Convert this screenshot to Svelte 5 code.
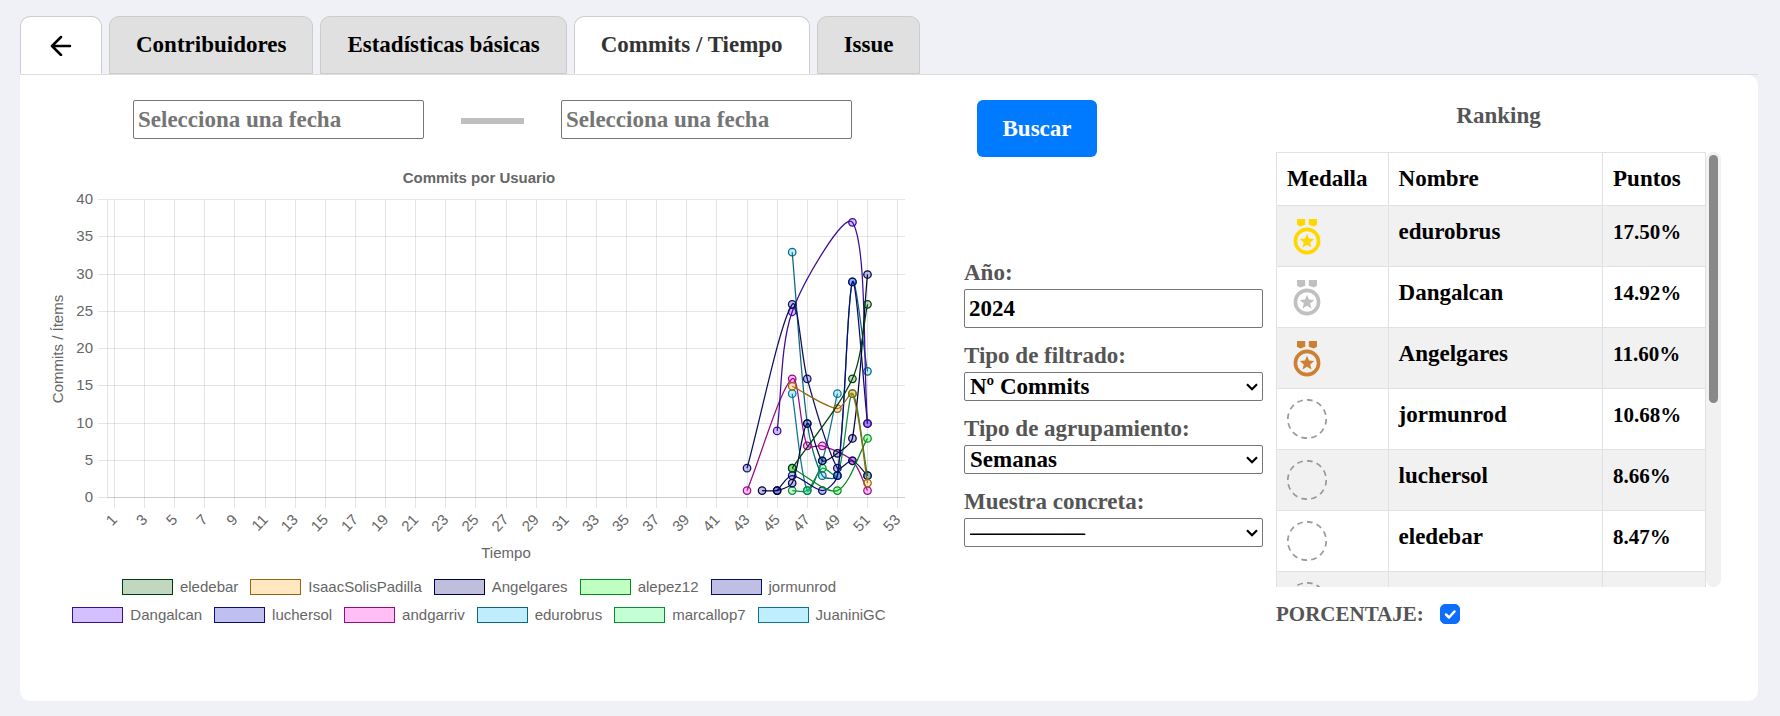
<script>
  const tabs = ['Contribuidores', 'Estadísticas básicas', 'Commits / Tiempo', 'Issue'];
  let active = $state('Commits / Tiempo');
  let from = $state('');
  let to = $state('');
  let year = $state('2024');
  let percent = $state(true);

  const series = [
    { name: 'eledebar', fill: '0,99,0', stroke: '#003c0c', data: [[46, 4], [50, 16], [51, 26]] },
    { name: 'IsaacSolisPadilla', fill: '255,163,3', stroke: '#96660c', data: [[46, 15], [49, 12], [50, 14], [51, 2]] },
    { name: 'Angelgares', fill: '0,0,115', stroke: '#000048', data: [[44, 1], [45, 1], [46, 2], [47, 10], [48, 5], [49, 6], [50, 8], [51, 30]] },
    { name: 'alepez12', fill: '0,255,10', stroke: '#008c1c', data: [[46, 4], [49, 1], [51, 8]] },
    { name: 'jormunrod', fill: '0,0,150', stroke: '#0c0c60', data: [[43, 4], [46, 26], [47, 16], [49, 4], [50, 5], [51, 3]] },
    { name: 'Dangalcan', fill: '85,0,255', stroke: '#3c0c96', data: [[45, 9], [46, 25], [50, 37], [51, 10]] },
    { name: 'luchersol', fill: '0,0,195', stroke: '#0c0c70', data: [[45, 1], [46, 3], [48, 1], [49, 3], [50, 29], [51, 10]] },
    { name: 'andgarriv', fill: '255,0,215', stroke: '#960c84', data: [[43, 1], [46, 16], [47, 7], [48, 7], [50, 5], [51, 1]] },
    { name: 'edurobrus', fill: '0,185,240', stroke: '#0c667c', data: [[46, 33], [47, 10], [48, 3], [49, 3], [50, 29], [51, 17]] },
    { name: 'marcallop7', fill: '15,255,75', stroke: '#0c8c38', data: [[46, 1], [47, 1], [48, 4], [49, 3], [50, 14], [51, 3]] },
    { name: 'JuaniniGC', fill: '0,190,255', stroke: '#0c7494', data: [[46, 14], [47, 1], [48, 5], [49, 14]] }
  ];

  const ranking = [
    { name: 'edurobrus', points: '17.50%', medal: '#ffd700' },
    { name: 'Dangalcan', points: '14.92%', medal: '#c0c0c0' },
    { name: 'Angelgares', points: '11.60%', medal: '#cd7f32' },
    { name: 'jormunrod', points: '10.68%' },
    { name: 'luchersol', points: '8.66%' },
    { name: 'eledebar', points: '8.47%' },
    {}, {}, {}, {}, {}
  ];

  // Scroll position of the ranking, as a share of its content height
  let scrolled = $state(0);
  const onscroll = (e) => (scrolled = e.currentTarget.scrollTop / e.currentTarget.scrollHeight);

  // Plot geometry
  const left = 80, right = 877, top = 35, bottom = 333;
  const px = (week) => 86.5 + (week - 1) * 15.06;
  const py = (value) => bottom - (value * (bottom - top)) / 40;
  const crisp = (v) => Math.floor(v) + 0.5;
  const weeks = Array.from({ length: 27 }, (_, i) => i * 2 + 1);
  const values = [0, 5, 10, 15, 20, 25, 30, 35, 40];

  // Smooth line: control points follow the neighbours, weighted by distance
  function curve(data) {
    const tension = 0.3;
    const p = data.map(([w, v]) => [px(w), py(v)]);
    const clamp = (y) => Math.max(top, Math.min(bottom, y));
    const ctrl = p.map((c, i) => {
      const a = p[i - 1] ?? c;
      const b = p[i + 1] ?? c;
      const d1 = Math.hypot(c[0] - a[0], c[1] - a[1]);
      const d2 = Math.hypot(b[0] - c[0], b[1] - c[1]);
      const f1 = (tension * d1) / (d1 + d2);
      const f2 = (tension * d2) / (d1 + d2);
      return [
        [c[0] - f1 * (b[0] - a[0]), clamp(c[1] - f1 * (b[1] - a[1]))],
        [c[0] + f2 * (b[0] - a[0]), clamp(c[1] + f2 * (b[1] - a[1]))]
      ];
    });
    return p
      .map((c, i) => (i === 0 ? `M${c}` : `C${ctrl[i - 1][1]} ${ctrl[i][0]} ${c}`))
      .join(' ');
  }
  const layers = [...series].reverse();
</script>

{#snippet chevron()}
  <svg class="chevron" viewBox="0 0 12 8" aria-hidden="true"><path d="M1 1.2 6 6.200l5-5" fill="none" stroke="#000" stroke-width="2.200" /></svg>
{/snippet}

<div class="page">
  <nav class="tabs">
    <button class="tab back" aria-label="Volver">
      <svg width="22" height="22" viewBox="0 0 22 22" aria-hidden="true">
        <path d="M20 12H2.500M11 3 2 12l9 9" fill="none" stroke="#000" stroke-width="2.500" stroke-linejoin="round" stroke-linecap="round" />
      </svg>
    </button>
    {#each tabs as tab}
      <button class="tab" class:active={tab === active} onclick={() => (active = tab)}>{tab}</button>
    {/each}
  </nav>

  <main class="panel">
    <section class="chart-column">
      <div class="dates">
        <input type="text" placeholder="Selecciona una fecha" aria-label="Fecha inicial" bind:value={from} />
        <span class="dash"></span>
        <input type="text" placeholder="Selecciona una fecha" aria-label="Fecha final" bind:value={to} />
      </div>

      <svg class="chart" viewBox="0 0 923 403" role="img" aria-label="Commits por Usuario">
        <text class="title" x="451" y="18" text-anchor="middle">Commits por Usuario</text>
        <g class="grid">
          {#each weeks as w}
            <path d="M{crisp(px(w))} {top}V{bottom + 10}" />
          {/each}
          {#each values as v}
            <path d="M{left - 10} {crisp(py(v) - 0.5)}H{right}" />
          {/each}
          <path d="M{left - 0.5} {top}V{bottom}" />
          <path d="M{left} {bottom - 0.5}H{right}" />
        </g>
        {#each values as v}
          <text x="65" y={py(v) + 4} text-anchor="end">{v}</text>
        {/each}
        {#each weeks as w}
          <text transform="translate({px(w)} 352) rotate(-46)" y="5" text-anchor="end">{w}</text>
        {/each}
        <text transform="translate(35 184) rotate(-90)" text-anchor="middle">Commits / Ítems</text>
        <text x="478" y="393" text-anchor="middle">Tiempo</text>
        {#each layers as s}
          <path class="line" d={curve(s.data)} stroke={s.stroke} />
          {#each s.data as [w, v]}
            <circle cx={px(w)} cy={py(v)} r="3.750" fill="rgba({s.fill},0.25)" stroke={s.stroke} />
          {/each}
        {/each}
      </svg>

      <ul class="legend">
        {#each series as s}
          <li><span class="swatch" style="background: rgba({s.fill},0.25); border-color: {s.stroke}"></span>{s.name}</li>
        {/each}
      </ul>
    </section>

    <section class="filters">
      <button class="search">Buscar</button>
      <div class="fields">
        <div class="field">
          <label for="year">Año:</label>
          <input id="year" type="text" bind:value={year} />
        </div>
        <div class="field">
          <label for="filter">Tipo de filtrado:</label>
          <div class="select"><select id="filter"><option>Nº Commits</option></select>{@render chevron()}</div>
        </div>
        <div class="field">
          <label for="group">Tipo de agrupamiento:</label>
          <div class="select"><select id="group"><option>Semanas</option></select>{@render chevron()}</div>
        </div>
        <div class="field">
          <label for="sample">Muestra concreta:</label>
          <div class="select"><select id="sample"><option>—————</option></select>{@render chevron()}</div>
        </div>
      </div>
    </section>

    <section class="ranking">
      <h2>Ranking</h2>
      <div class="list">
        <div class="scroll" {onscroll}>
          <table>
            <thead>
              <tr><th class="medal">Medalla</th><th>Nombre</th><th class="points">Puntos</th></tr>
            </thead>
            <tbody>
              {#each ranking as r}
                <tr>
                  <td>
                    <svg class="badge" viewBox="0 0 40 40" aria-hidden="true">
                      {#if r.medal}
                        <g fill={r.medal}>
                          <path d="M10 3h8.200v5.700l-5 1.700-3.200-1.700zM21.800 3h8.200v5.700l-3.200 1.700-5-1.700z" />
                          <circle cx="20" cy="25" r="11.600" fill="none" stroke={r.medal} stroke-width="3.600" />
                          <path d="m20 17.800 2 4.800 5.200.400-4 3.400 1.300 5.100-4.500-2.800-4.500 2.800 1.300-5.100-4-3.400 5.200-.400z" />
                        </g>
                      {:else}
                        <circle cx="20" cy="20" r="19.200" fill="none" stroke="#999" stroke-width="1.700" pathLength="84" stroke-dasharray="4 3" />
                      {/if}
                    </svg>
                  </td>
                  <td>{r.name ?? ''}</td>
                  <td class="points">{r.points ?? ''}</td>
                </tr>
              {/each}
            </tbody>
          </table>
        </div>
        <div class="track"><div class="thumb" style="top: {scrolled * 100}%"></div></div>
      </div>
      <label class="percent">
        PORCENTAJE:
        <span class="check">
          <input type="checkbox" bind:checked={percent} />
          {#if percent}
            <svg viewBox="0 0 20 20" aria-hidden="true"><path d="m6 10.500 3 3 5.500-6" fill="none" stroke="#fff" stroke-width="2.500" stroke-linecap="round" stroke-linejoin="round" /></svg>
          {/if}
        </span>
      </label>
    </section>
  </main>
</div>

<style>
  :global(body) {
    background: #f0f1f6;
  }
  .page, .page * {
    box-sizing: border-box;
  }
  .page {
    padding: 16px 22px 15px 20px;
    font: bold 23px/26px 'Liberation Serif', serif;
    color: #555;
  }
  button, input, select {
    font: inherit;
    color: #000;
  }
  .tabs {
    display: flex;
    gap: 7px;
    border-bottom: 1px solid #ddd;
  }
  .tab {
    height: 58px;
    padding: 0 26px;
    border: 1px solid #ccc;
    border-radius: 10px 10px 0 0;
    background: #e0e0e0;
    cursor: pointer;
  }
  .tab.active, .tab.back {
    background: #fff;
    border-bottom-color: #fff;
    color: #333;
  }
  .tab.back {
    display: grid;
    place-items: center;
    padding: 0 29px;
  }
  .panel {
    display: grid;
    grid-template-columns: minmax(0, 923fr) minmax(0, 299fr) minmax(0, 445fr);
    gap: 13px;
    min-height: calc(100vh - 90px);
    padding: 25px 37px 20px 8px;
    background: #fff;
    border-radius: 0 10px 10px 10px;
  }
  .dates {
    display: flex;
    align-items: center;
    justify-content: center;
    gap: 37px;
    padding-left: 6px;
  }
  input[type='text'] {
    height: 39px;
    padding: 1px 4px;
    border: 1px solid #767676;
    border-radius: 2px;
    background: #fff;
    min-width: 0;
  }
  .dates input {
    width: 291px;
  }
  input::placeholder {
    color: #757575;
    opacity: 1;
  }
  .dash {
    width: 63px;
    height: 6px;
    margin-top: 2px;
    background: #bfbfbf;
  }
  .chart {
    display: block;
    width: 100%;
    margin-top: 26px;
  }
  .chart text {
    font: 15px 'Liberation Sans', sans-serif;
    fill: #666;
  }
  .chart .title {
    font-weight: bold;
  }
  .grid path {
    stroke: rgba(0, 0, 0, 0.1);
  }
  .line {
    fill: none;
    stroke-width: 1.25;
  }
  .chart circle {
    stroke-width: 1.25;
  }
  .legend {
    display: flex;
    flex-wrap: wrap;
    justify-content: center;
    gap: 12px;
    margin: 11px 0 0;
    padding: 0 52px 0 31px;
    list-style: none;
    font: 15px/16px 'Liberation Sans', sans-serif;
    color: #666;
  }
  .legend li {
    display: flex;
    gap: 7px;
  }
  .swatch {
    width: 51px;
    height: 16px;
    border: 1px solid;
  }
  .search {
    display: block;
    height: 57px;
    width: 120px;
    margin-left: 13px;
    border: 0;
    border-radius: 6px;
    background: #007bff;
    color: #fff;
    cursor: pointer;
  }
  .fields {
    display: flex;
    flex-direction: column;
    gap: 15px;
    margin-top: 103px;
  }
  .field {
    display: flex;
    flex-direction: column;
    gap: 3px;
  }
  .select {
    position: relative;
    display: flex;
  }
  select {
    appearance: none;
    width: 100%;
    height: 29px;
    padding: 0 24px 0 5px;
    border: 1px solid #767676;
    border-radius: 2px;
    background: #fff;
  }
  .chevron {
    position: absolute;
    right: 5px;
    top: 11px;
    width: 12px;
    height: 8px;
    pointer-events: none;
  }
  h2 {
    margin: 0;
    padding: 2px 0 22px;
    font: inherit;
    line-height: 28px;
    text-align: center;
  }
  .list {
    display: flex;
    height: 435px;
  }
  .scroll {
    flex: 1;
    overflow-y: scroll;
    scrollbar-width: none;
  }
  .track {
    position: relative;
    width: 15px;
    background: #f1f1f1;
    border-radius: 10px;
  }
  .thumb {
    position: absolute;
    left: 3px;
    width: 9px;
    height: 57%;
    margin-top: 3px;
    background: #888;
    border-radius: 5px;
  }
  table {
    width: 100%;
    margin-bottom: 20px;
    border-collapse: collapse;
    table-layout: fixed;
    color: #000;
    line-height: 32px;
  }
  th, td {
    padding: 10px;
    border: 1px solid #dee2e6;
    text-align: left;
    vertical-align: top;
  }
  th.medal {
    width: 26%;
  }
  th.points {
    width: 24%;
  }
  td.points {
    font-size: 21px;
  }
  tbody tr:nth-child(odd) {
    background: #f1f1f1;
  }
  .badge {
    display: block;
    width: 40px;
    height: 40px;
  }
  .percent {
    display: flex;
    align-items: center;
    gap: 16px;
    margin-top: 13px;
    font-size: 21px;
    line-height: 28px;
  }
  .check {
    position: relative;
    display: flex;
  }
  .check input {
    appearance: none;
    width: 20px;
    height: 20px;
    margin: 0;
    border: 1px solid #0d6efd;
    border-radius: 5px;
    background: #fff;
  }
  .check input:checked {
    background: #0d6efd;
  }
  .check svg {
    position: absolute;
    inset: 0;
    pointer-events: none;
  }
</style>
